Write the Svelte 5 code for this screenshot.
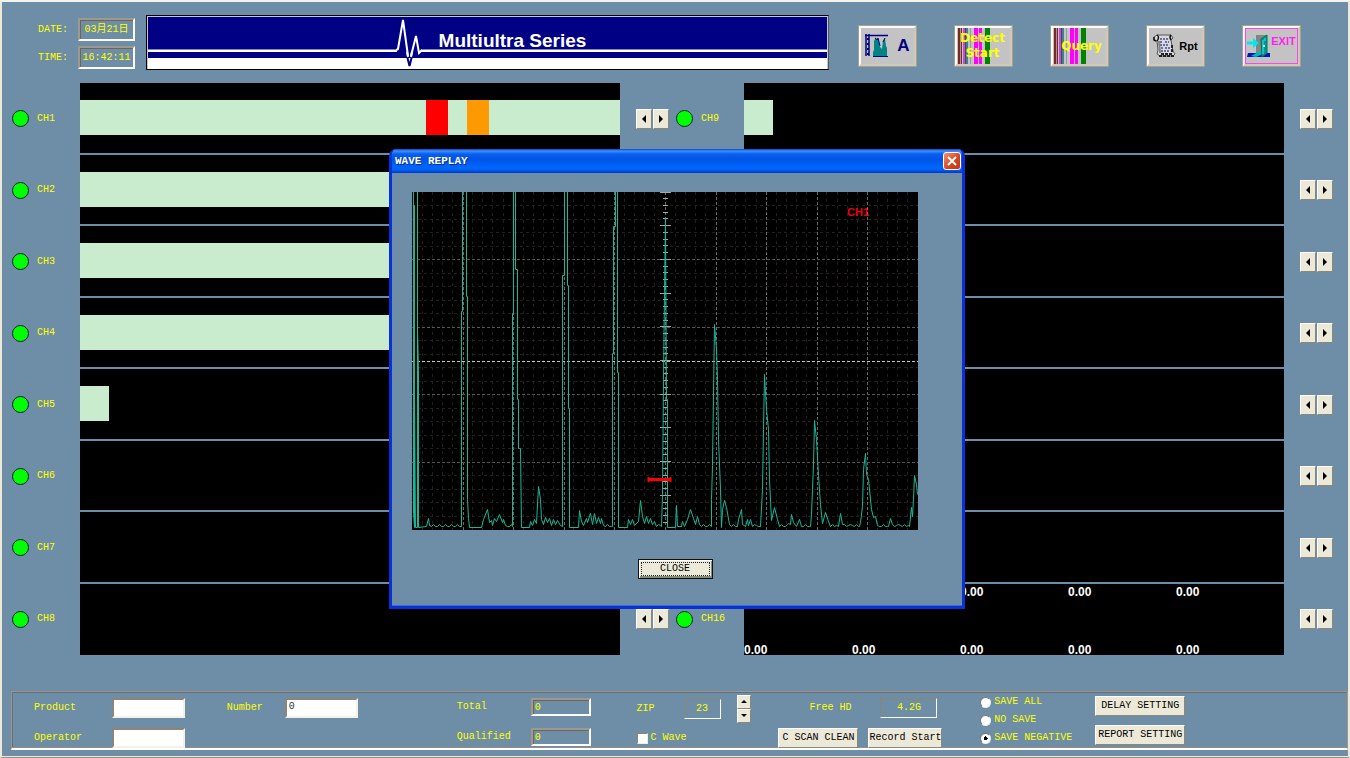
<script>
  const full = [{ w: 100, c: '#c8eccd' }];
  const short = [{ w: 5.4, c: '#c8eccd' }];
  const marked = [
    { w: 64.1, c: '#c8eccd' },
    { w: 4, c: '#ff0000' },
    { w: 3.6, c: '#c8eccd' },
    { w: 4, c: '#ff9900' },
    { w: 24.3, c: '#c8eccd' }
  ];
  const bars = { 1: marked, 2: full, 3: full, 4: full, 5: short, 9: short };
  const banks = [0, 8].map((start) =>
    Array.from({ length: 8 }, (_, i) => ({ id: start + i + 1, bar: bars[start + i + 1] ?? [] }))
  );
  const readings = ['0.00', '0.00', '0.00', '0.00', '0.00'];

  let save = $state('SAVE NEGATIVE');
  let open = $state(true);

  // Scope geometry
  const W = 506;
  const H = 338;
  const cols = Array.from({ length: 49 }, (_, i) => i + 1);
  const rows = Array.from({ length: 24 }, (_, i) => i + 1);
  const ticks = Array.from({ length: 50 }, (_, i) => i);
  const px = (v) => Math.floor(v) + 0.5;

  // Echo trace: key points of the received signal
  const trace = [
    [1, 0], [1, 322], [2, 336], [2, 14], [2, 208], [3, 336], [5, 336], [5, 0], [5, 138], [6, 179], [6, 336],
    [14, 335], [16, 327], [17, 334], [49, 335], [49, 120], [50, 120], [50, 0], [54, 0], [54, 105], [55, 105], [55, 308],
    [56, 327], [57, 336], [69, 336], [71, 328], [75, 318], [77, 331], [79, 329], [80, 334], [82, 327], [84, 330], [87, 323], [90, 331], [91, 328], [93, 334],
    [100, 335], [100, 122], [101, 122], [101, 0], [103, 0], [103, 78], [105, 78], [105, 208], [106, 208], [106, 257], [108, 257], [109, 336],
    [117, 336], [118, 330], [120, 334], [122, 328], [124, 332], [126, 295], [128, 308], [129, 328], [131, 333], [133, 326], [135, 331], [137, 327], [139, 334], [141, 328], [143, 333], [145, 329], [148, 334],
    [150, 335], [150, 84], [152, 84], [152, 0], [155, 0], [155, 94], [156, 94], [156, 217], [157, 217], [157, 336],
    [166, 336], [167, 319], [169, 330], [171, 334], [174, 327], [175, 331], [178, 322], [180, 333], [182, 322], [184, 332], [186, 326], [188, 332], [189, 327], [191, 334],
    [200, 335], [200, 162], [201, 162], [201, 35], [203, 35], [203, 0], [205, 0], [205, 181], [206, 181], [206, 336],
    [215, 336], [216, 328], [218, 333], [220, 328], [222, 334], [226, 330], [228, 309], [230, 325], [232, 332], [234, 325], [236, 332], [238, 327], [240, 333], [242, 330], [244, 335],
    [249, 335], [250, 303], [251, 188], [252, 100], [253, 26], [254, 208], [255, 208], [255, 336],
    [263, 336], [264, 314], [265, 335], [269, 335], [270, 330], [272, 335], [275, 328], [278, 318], [281, 327], [283, 333], [285, 325], [287, 333],
    [299, 335], [299, 308], [300, 274], [301, 203], [302, 133], [304, 158], [305, 188], [306, 248], [308, 298], [309, 336],
    [310, 318], [312, 309], [314, 316], [317, 333], [325, 335], [326, 328], [329, 318], [330, 333], [333, 335], [335, 328], [336, 334], [338, 328], [340, 335],
    [348, 335], [350, 298], [351, 238], [352, 183], [354, 218], [356, 238], [357, 288], [359, 329], [362, 316], [365, 328], [367, 335],
    [376, 332], [378, 333], [379, 323], [381, 331], [384, 335], [387, 328], [389, 335], [398, 335], [399, 323], [400, 298], [401, 273], [402, 229], [404, 248], [406, 284],
    [408, 313], [410, 332], [413, 321], [416, 330], [418, 335], [426, 335], [428, 322], [430, 333], [447, 335], [448, 331], [450, 315], [451, 278], [453, 262], [454, 283],
    [456, 288], [459, 318], [461, 326], [463, 325], [465, 334], [476, 335], [478, 327], [480, 333], [497, 335], [499, 316], [500, 325], [501, 308], [502, 284], [504, 293], [505, 303]
  ];

  // Quiet stretches of the trace carry a small ripple
  function ripple(points) {
    const out = [];
    points.forEach(([x, y], i) => {
      out.push([x, y]);
      const next = points[i + 1];
      if (next && y >= 332 && y < 336 && next[1] >= 331 && next[0] - x > 4) {
        for (let k = x + 2; k < next[0]; k += 2) out.push([k, 334 + ((k * 7) % 3 === 0 ? -1 : (k / 2) % 2 ? 1 : 0)]);
      }
    });
    return out.map(([x, y]) => `${x + 0.5},${y - 0.5}`).join(' ');
  }
  const echo = ripple(trace);
</script>

<div class="app">
  <header>
    <div class="clock">
      <span>DATE:</span><output class="sunken">03月21日</output>
      <span>TIME:</span><output class="sunken">16:42:11</output>
    </div>

    <div class="banner">
      <svg class="pulse" width="26" height="52" viewBox="0 0 26 52" aria-hidden="true">
        <path d="M1 31h24v6H1z" fill="#000084" />
        <path d="M0 34L2 33 7 4 12 40 M15 40L20 20 23 37 26 34" fill="none" stroke="#fff" stroke-width="2" />
        <path d="M11 40L13.500 50 16 40" fill="none" stroke="#000084" stroke-width="2" />
        <path d="M11 36L12 41M16 36L15 41" stroke="#fff" stroke-width="2" />
      </svg>
      <h1>Multiultra Series</h1>
    </div>

    <nav>
      <button class="tool" aria-label="A scan">
        <svg width="24" height="24" viewBox="0 0 24 24" aria-hidden="true">
          <path d="M1 0V22M4 0V22M0 1.500H23" stroke="#000084" stroke-width="1.500" fill="none" />
          <path d="M2 5h2M2 10h2M2 15h2M2 20h2" stroke="#000084" stroke-width="2" />
          <path d="M8 23V18L9 16V7L11 3 12 6 13 4 15 13 17 15 18 7 20 4 21 12 22 14V23Z" fill="#008484" />
          <path d="M10 4L12 6 13 4 15 12M18 8L20 4M8 22.500h15" stroke="#000084" fill="none" />
        </svg>
        <b class="navy">A</b>
      </button>
      <button class="tool stripes"><b class="yellow">Detect<br />Start</b></button>
      <button class="tool stripes query"><b class="yellow">Query</b></button>
      <button class="tool">
        <svg width="23" height="24" viewBox="0 0 23 24" aria-hidden="true">
          <path d="M4 1L18 1 20 4 18 6 20 17 22 20 20 22H7L4 20 5 16 4 7 1 6V3Z" fill="#d8d8d8" stroke="#555" />
          <path d="M4 1Q7 3 4 7M1 3V6L3 7M18 1Q16 3 18 6" fill="none" stroke="#111" stroke-width="1.500" />
          <path d="M6 7L7 19" stroke="#848484" stroke-width="2" />
          <path d="M7 5h8M7 8h3M12 8h4M7 11h8M8 14h3M12 14h5M8 17h8" stroke="#4a4a9c" stroke-width="1.500" stroke-dasharray="2 1" />
          <path d="M6 22h15M8 20h11M19 11V18" stroke="#222" stroke-width="2" stroke-dasharray="3 1" />
        </svg>
        <b class="small">Rpt</b>
      </button>
      <button class="tool exit">
        <svg width="24" height="24" viewBox="0 0 24 24" aria-hidden="true">
          <path d="M9 1H20V20H9Z" fill="#848484" />
          <path d="M1 19H23V23H0Z" fill="#0018b8" />
          <path d="M4 22L15 16 16 20 9 23Z" fill="#00b8bd" />
          <path d="M14 5L20 1V19L15 23Z" fill="#00979c" stroke="#075" />
          <path d="M16 6v14M18 4v3" stroke="#39e7e7" />
          <circle cx="17" cy="12" r="1" fill="#fff" />
          <path d="M0 7.500H6V4L12 9 6 14V10.500H0Z" fill="#00e7ef" />
        </svg>
        <b class="small">EXIT</b>
      </button>
    </nav>
  </header>

  <main>
    {#each banks as bank}
      <section class="bank">
        {#each bank as ch}
          <div class="row">
            <div class="name"><i class="lamp"></i><span>CH{ch.id}</span></div>
            <div class="track">
              <div class="bar">
                {#each ch.bar as seg}<i style="width:{seg.w}%;background:{seg.c}"></i>{/each}
              </div>
              {#if ch.id === 16}
                <div class="scale top">{#each readings as r}<span>{r}</span>{/each}</div>
                <div class="scale">{#each readings as r}<span>{r}</span>{/each}</div>
              {/if}
            </div>
            <div class="step">
              <button aria-label="CH{ch.id} back"><svg width="4" height="8" viewBox="0 0 4 8"><path d="M4 0V8L0 4Z" /></svg></button>
              <button aria-label="CH{ch.id} forward"><svg width="4" height="8" viewBox="0 0 4 8"><path d="M0 0V8L4 4Z" /></svg></button>
            </div>
          </div>
        {/each}
      </section>
    {/each}
  </main>

  <footer>
    <div class="pair wide">
      <label for="product">Product</label><input id="product" type="text" />
      <label for="operator">Operator</label><input id="operator" type="text" />
    </div>
    <div class="pair number">
      <label for="number">Number</label><input id="number" type="text" value="0" />
    </div>
    <div class="pair total">
      <label for="total">Total</label><input id="total" class="sunken" readonly value="0" />
      <label for="qualified">Qualified</label><input id="qualified" class="sunken" readonly value="0" />
    </div>
    <div class="zip">
      <div class="line">
        <span class="word">ZIP</span><output class="thin">23</output>
        <div class="spin">
          <button aria-label="ZIP up"><svg width="6" height="3" viewBox="0 0 6 3"><path d="M0 3H6L3 0Z" /></svg></button>
          <button aria-label="ZIP down"><svg width="6" height="3" viewBox="0 0 6 3"><path d="M0 0H6L3 3Z" /></svg></button>
        </div>
      </div>
      <label class="check"><input type="checkbox" />C Wave</label>
    </div>
    <div class="disk">
      <div class="line"><span>Free HD</span><output class="thin">4.2G</output></div>
      <div class="line actions">
        <button class="push">C SCAN CLEAN</button>
        <button class="push">Record Start</button>
      </div>
    </div>
    <div class="modes">
      {#each ['SAVE ALL', 'NO SAVE', 'SAVE NEGATIVE'] as mode}
        <label><input type="radio" name="save" value={mode} bind:group={save} />{mode}</label>
      {/each}
    </div>
    <div class="settings">
      <button class="push">DELAY SETTING</button>
      <button class="push">REPORT SETTING</button>
    </div>
  </footer>

  {#if open}
    <div class="overlay">
      <div class="dialog" role="dialog" aria-labelledby="dialog-title">
        <div class="titlebar">
          <h2 id="dialog-title">WAVE REPLAY</h2>
          <button class="x" aria-label="Close window" onclick={() => (open = false)}>
            <svg width="10" height="10" viewBox="0 0 10 10"><path d="M1 1L9 9M9 1L1 9" stroke="#fff" stroke-width="2" /></svg>
          </button>
        </div>
        <div class="content">
          <svg class="scope" viewBox="0 0 {W} {H}" role="img" aria-label="Channel 1 echo trace">
            <rect width={W} height={H} fill="#000" />
            <g stroke-width="1">
              {#each cols as i}
                {#if i % 5}<path d="M{px(i * 10.12)} 0V{H}" stroke="#231f1c" stroke-dasharray="3 4" />{/if}
              {/each}
              {#each rows as i}
                {#if i % 5}<path d="M0 {px(i * 13.5)}H{W}" stroke="#231f1c" stroke-dasharray="3 3" />{/if}
              {/each}
              {#each cols as i}
                {#if i % 5 === 0}<path d="M{px(i * 10.12 + 0.5)} 0V{H}" stroke="#6a6a6a" stroke-dasharray="3 2" />{/if}
              {/each}
              {#each rows as i}
                {#if i % 5 === 0}<path d="M0 {px(i * 13.5)}H{W}" stroke="#565656" stroke-dasharray="3 2" />{/if}
              {/each}
              <path d="M0 169.500H{W}" stroke="#c4c4c4" stroke-dasharray="3 2" />
              {#each ticks as i}
                <path d="M{i % 5 ? 251 : 248} {px(i * 6.74)}H{i % 5 ? 256 : 259}" stroke="#a8a8a8" />
              {/each}
            </g>
            <polyline points={echo} fill="none" stroke="#19b89b" stroke-width="1" />
            <path d="M236 287.500H259" stroke="#f00" stroke-width="3" />
            <path d="M236.500 285V290M258.500 285V290" stroke="#f00" stroke-width="2" />
            <text x="435" y="24">CH1</text>
          </svg>
          <div class="buttons"><button class="close" onclick={() => (open = false)}>CLOSE</button></div>
        </div>
      </div>
    </div>
  {/if}
</div>

<style>
  :global(body) { margin: 0; background: #6d8ea6; }
  :global(*) { box-sizing: border-box; }

  .app {
    position: relative;
    display: flex;
    flex-direction: column;
    min-height: 100vh;
    min-width: 1200px;
    background: #6d8ea6;
    border: 2px solid #ece9d8;
    border-top-color: #f4f4ee;
    border-bottom: 1px solid #9a9084;
    color: #ffff00;
    font: 10px/12px "Liberation Mono", "Noto Sans CJK SC", monospace;
  }
  button, input { font: inherit; padding: 0; margin: 0; border-radius: 0; }
  h1, h2 { margin: 0; }

  header {
    display: flex;
    align-items: flex-start;
    height: 81px;
    padding: 13px 47px 0 36px;
  }
  .clock {
    display: grid;
    grid-template-columns: 40px 57px;
    grid-auto-rows: 23px;
    row-gap: 5px;
    align-items: center;
    padding-top: 3px;
  }
  .sunken {
    border: 2px solid;
    border-color: #a0988c #fff #fff #a0988c;
    background: transparent;
    color: #ffff00;
    box-shadow: inset 1px 1px #6b675f;
  }
  .clock .sunken { height: 23px; line-height: 19px; text-align: center; white-space: nowrap; }
  .banner {
    flex: 1;
    display: flex;
    height: 55px;
    margin: 0 29px 0 11px;
    border: 1px solid #000;
    border-right-color: #555;
    box-shadow: inset 1px 1px #c8c8d4, inset -1px 0 #c8c8d4;
    background: linear-gradient(#000084 33px, #8484c0 33px 34px, #fff 34px 36px, #000084 36px 42px, #fff 42px);
  }
  .pulse { flex: none; margin-left: 36.500%; }
  .banner h1 {
    margin: 14px 0 0 17px;
    color: #fff;
    font: bold 19px/22px "Liberation Sans", sans-serif;
    white-space: nowrap;
  }
  nav { display: flex; gap: 37px; padding-top: 10px; }
  .tool {
    display: flex;
    align-items: center;
    justify-content: center;
    gap: 8px;
    width: 59px;
    height: 42px;
    border: 3px solid;
    border-color: #fbfaf4 #cfcab8 #cfcab8 #fbfaf4;
    outline: 1px solid #a5a294;
    outline-offset: -1px;
    background: #c3c3c3;
    color: #000;
    font-family: "DejaVu Sans", sans-serif;
  }
  .tool svg { flex: none; }
  .navy { color: #000084; font: bold 17px/20px "Liberation Sans", sans-serif; }
  .small { font: bold 11px/14px "Liberation Sans", sans-serif; }
  .tool:has(.small) { gap: 3px; }
  .yellow { color: #ffff00; font: bold 12px/15px "DejaVu Sans", sans-serif; }
  .stripes {
    padding-right: 2px;
    background: linear-gradient(90deg, #c3c3c3 1px, #7b2828 1px 3px, #999 3px 4px, #7b2828 4px 5px, #c3c3c3 5px 6px,
      #e040d0 6px 8px, #446 8px 9px, #30898c 9px 11px, #c3c3c3 11px 13px, #999 13px 14px, #c3c3c3 14px 17px,
      #ff00ff 17px 21px, #c3c3c3 21px 22px, #ff00ff 22px 25px, #c3c3c3 25px 28px, #008400 28px 33px, #c3c3c3 33px);
  }
  .query { padding: 0 0 0 4px; }
  .exit { color: #ff22ee; box-shadow: inset 0 0 0 1px #ff44ee; }
  .tool.exit { gap: 0; }
  .exit b { align-self: flex-start; padding-top: 6px; }

  main {
    flex: 1;
    display: grid;
    grid-template-columns: 1fr 1fr;
    gap: 6px;
    padding: 0 14px 0 10px;
  }
  .bank { display: grid; grid-template-rows: repeat(8, minmax(0, 1fr)); }
  .row { display: grid; grid-template-columns: 68px 1fr 34px; }
  .name { display: flex; align-items: center; gap: 8px; }
  .lamp { width: 17px; height: 17px; border: 1px solid #123; border-radius: 50%; background: #00ff00; }
  .track {
    display: flex;
    flex-direction: column;
    position: relative;
    margin-right: 16px;
    background: #000;
    border-bottom: 2px solid #6d8ea6;
  }
  .row:last-child .track { border-bottom: 0; }
  .bar { display: flex; height: 35px; margin-top: 17px; }
  .scale {
    position: absolute;
    left: 0;
    right: 0;
    bottom: -1px;
    display: grid;
    grid-template-columns: repeat(5, 1fr);
    color: #fff;
    font: bold 12px/12px "Liberation Sans", sans-serif;
  }
  .scale.top { top: 2px; bottom: auto; }
  .step { display: flex; align-items: center; gap: 1px; }
  .step button, .spin button, .push {
    display: flex;
    align-items: center;
    justify-content: center;
    border: 1px solid;
    border-color: #fff #8c8878 #8c8878 #fff;
    background: #ece9d8;
    color: #000;
    white-space: nowrap;
  }
  .step button { width: 16px; height: 20px; }

  footer {
    display: grid;
    grid-template-columns: 193fr 230fr 180fr 142fr 202fr 115fr 252fr;
    height: 59px;
    margin: 36px 0 6px 9px;
    padding-left: 22px;
    border: 1px solid #a39688;
    border-bottom: 2px solid #fff;
    box-shadow: inset 0 -1px #978c80, inset 1px 1px #62707c;
  }
  .app::after { content: ""; height: 1px; background: #ece9d8; }
  .pair {
    display: grid;
    grid-template-columns: 78px 73px;
    grid-auto-rows: 20px;
    row-gap: 10px;
    align-items: center;
    align-content: start;
    padding-top: 6px;
  }
  .pair.number { grid-template-columns: 58px 73px; }
  .pair.total { grid-template-columns: 74px 60px; padding-top: 5px; }
  .pair input {
    width: 100%;
    height: 20px;
    padding: 0 2px 3px;
    border: 2px solid;
    border-color: #8c8478 #f4f2e8 #f4f2e8 #8c8478;
    background: #fff;
    color: #333;
  }
  .pair input.sunken { height: 18px; padding: 0 2px; border-color: #a0988c #fff #fff #a0988c; background: transparent; color: #ffff00; }
  .line { display: flex; align-items: center; }
  .thin { display: block; height: 20px; line-height: 18px; text-align: center; border: 1px solid; border-color: #8c8478 #fff #fff #8c8478; }
  .zip { padding-top: 2px; }
  .zip .line { height: 29px; }
  .word { width: 47px; }
  .zip .thin { width: 37px; }
  .spin { margin-left: 16px; }
  .spin button { width: 14px; height: 14px; }
  .check { display: flex; align-items: center; gap: 3px; margin-top: 9px; }
  .check input { appearance: none; width: 11px; height: 11px; background: #fff; border: 1px solid #8c8478; border-right-color: #eee; border-bottom-color: #eee; }
  .disk { display: grid; grid-template-rows: 20px 20px; row-gap: 10px; padding-top: 6px; align-content: start; }
  .disk .thin { width: 57px; }
  .disk .line span { margin-left: 31px; width: 71px; }
  .disk .actions { gap: 10px; }
  .push { height: 20px; padding: 0 3px; }
  .disk .push { padding: 0; width: 80px; }
  .disk .push:last-child { width: 74px; }
  .modes { display: grid; grid-template-rows: repeat(3, 18px); align-content: start; padding-top: 1px; }
  .modes label { display: flex; align-items: center; gap: 3px; white-space: nowrap; }
  .modes input { appearance: none; width: 11px; height: 11px; border: 1px solid #777; border-right-color: #eee; border-bottom-color: #eee; border-radius: 50%; background: #fff; }
  .modes input:checked { background: radial-gradient(circle, #000 2px, #fff 2px); }
  .settings { display: grid; grid-template-rows: 20px 20px; row-gap: 9px; padding-top: 4px; align-content: start; justify-items: start; }
  .settings .push { width: 90px; }

  .overlay { position: absolute; inset: 0; display: grid; place-items: center; padding: 0 0 2px 4px; pointer-events: none; }
  .dialog { width: 576px; pointer-events: auto; border: 3px solid #0831d9; border-top: 0; border-radius: 7px 7px 0 0; background: #6d8ea6; overflow: hidden; box-shadow: inset 0 -1px #3c6bd8; }
  .titlebar {
    display: flex;
    align-items: center;
    justify-content: space-between;
    height: 24px;
    padding: 0 1px 0 3px;
    background: linear-gradient(#0a40c8, #3a93ff 2px, #0a5ef0 5px, #0054e3 10px, #0066ff 19px, #0060f5 21px, #0036c0);
  }
  .titlebar h2 { color: #fff; font: bold 11px/14px "Liberation Mono", monospace; text-shadow: 1px 1px #0a2a80; }
  .x { display: grid; place-items: center; width: 18px; height: 18px; border: 1px solid #fff; border-radius: 3px; background: linear-gradient(135deg, #f09070, #d8431a 60%, #c03810); }
  .content { padding: 19px 44px 27px 20px; }
  .scope { display: block; width: 100%; }
  .scope text { fill: #f00000; font: bold 11px "Liberation Sans", sans-serif; }
  .buttons { display: flex; justify-content: center; padding: 29px 0 0 20px; }
  .close {
    width: 75px;
    height: 20px;
    border: 1px solid #111;
    outline: 1px dotted #222;
    outline-offset: -4px;
    background: #ece9d8;
    box-shadow: inset 1px 1px #fff, inset -1px -2px #8c8878;
    color: #000;
  }
</style>
